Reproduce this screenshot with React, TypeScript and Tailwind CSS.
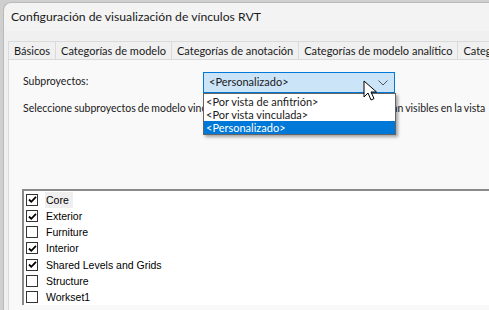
import React from "react";

const items = [
  { name: "Core", checked: true },
  { name: "Exterior", checked: true },
  { name: "Furniture", checked: false },
  { name: "Interior", checked: true },
  { name: "Shared Levels and Grids", checked: true },
  { name: "Structure", checked: false },
  { name: "Workset1", checked: false },
];

function Check({ checked }: { checked: boolean }) {
  return (
    <div className="w-[12px] h-[12px] border border-[#333] bg-white flex items-center justify-center shrink-0">
      {checked && (
        <svg width="9" height="9" viewBox="0 0 9 9">
          <path d="M1 4.5 L3.3 6.8 L8 1.8" stroke="#000" strokeWidth="1.8" fill="none" />
        </svg>
      )}
    </div>
  );
}

export default function App() {
  const ui = { fontFamily: 'Lato, "Open Sans", sans-serif' };
  return (
    <div className="w-[489px] h-[310px] overflow-hidden bg-[#cfcfcf] flex pl-[3px] pt-[2px]">
      <div className="flex-1 flex flex-col rounded-tl-[8px] border-l border-t border-[#b9b9b9] bg-[#f3f3f3] overflow-hidden">
        <div className="h-[28px] flex items-center pl-[7px] text-[12.2px] text-[#1a1a1a]" style={ui}>
          Configuración de visualización de vínculos RVT
        </div>
        <div className="flex-1 bg-[#f0f0f0] pt-[10px] pl-[4px] flex flex-col">
          <div className="flex h-[18px] text-[11px] text-[#1a1a1a] whitespace-nowrap" style={ui}>
            {["Básicos", "Categorías de modelo", "Categorías de anotación", "Categorías de modelo analítico", "Categorías importadas"].map((t, i) => (
              <div key={i} className={"border-t border-r border-[#dadada] px-[5px] flex items-center leading-none " + (i === 0 ? "border-l" : "")}>
                {t}
              </div>
            ))}
          </div>
          <div className="flex-1 bg-[#f9f9f9] border-l border-t border-[#dadada] relative">
            <div className="flex items-start pl-[14px] pt-[12px] text-[10.5px] text-[#1a1a1a]" style={ui}>
              <div className="w-[180px] pt-[2px]">Subproyectos:</div>
              <div className="relative">
                <div className="w-[192px] h-[21px] bg-[#cce4f7] border border-[#0078d7] flex items-center pl-[5px] pr-[6px] justify-between text-[11px]">
                  <span>&lt;Personalizado&gt;</span>
                  <svg width="10" height="6" viewBox="0 0 10 6">
                    <path d="M0.5 0.5 L5 5 L9.5 0.5" stroke="#555" strokeWidth="1" fill="none" />
                  </svg>
                </div>
                <div className="absolute left-0 top-[21px] w-[193px] bg-white border border-[#646464] shadow-[2px_2px_3px_rgba(0,0,0,0.35)] z-10 leading-[13px] text-[11px]">
                  <div className="pl-[2px] h-[13px] mt-[1px]">&lt;Por vista de anfitrión&gt;</div>
                  <div className="pl-[2px] h-[13px]">&lt;Por vista vinculada&gt;</div>
                  <div className="pl-[2px] h-[13px] bg-[#0078d7] text-white">&lt;Personalizado&gt;</div>
                </div>
                <svg className="absolute left-[160px] top-[8px] z-20" width="17" height="22" viewBox="0 0 17 22">
                  <path d="M1 1 L1 17 L5 13 L8 20 L11 18.6 L8 12 L13.5 12 Z" fill="#fff" stroke="#000" strokeWidth="1" strokeLinejoin="round" />
                </svg>
              </div>
            </div>
            <div className="pl-[14px] pt-[8px] text-[10.5px] text-[#1a1a1a] whitespace-nowrap [word-spacing:-0.6px]" style={ui}>
              Seleccione subproyectos de modelo vinculado que desea que siempre se mantengan visibles en la vista
            </div>
            <div className="ml-[13px] mt-[72px] bg-white border-l-2 border-t-2 border-[#8a8a8a] pt-[1px] pl-[2px]">
              {items.map((it, i) => (
                <div key={i} className="flex items-center h-[16.2px] gap-[7px]">
                  <Check checked={it.checked} />
                  <span
                    className={"text-[10.5px] text-black leading-[16px] px-[1px] " + (i === 0 ? "bg-[#efefef] pr-[4px]" : "")}
                    style={{ fontFamily: '"Liberation Sans", Arial, sans-serif' }}
                  >
                    {it.name}
                  </span>
                </div>
              ))}
            </div>
          </div>
        </div>
      </div>
    </div>
  );
}
